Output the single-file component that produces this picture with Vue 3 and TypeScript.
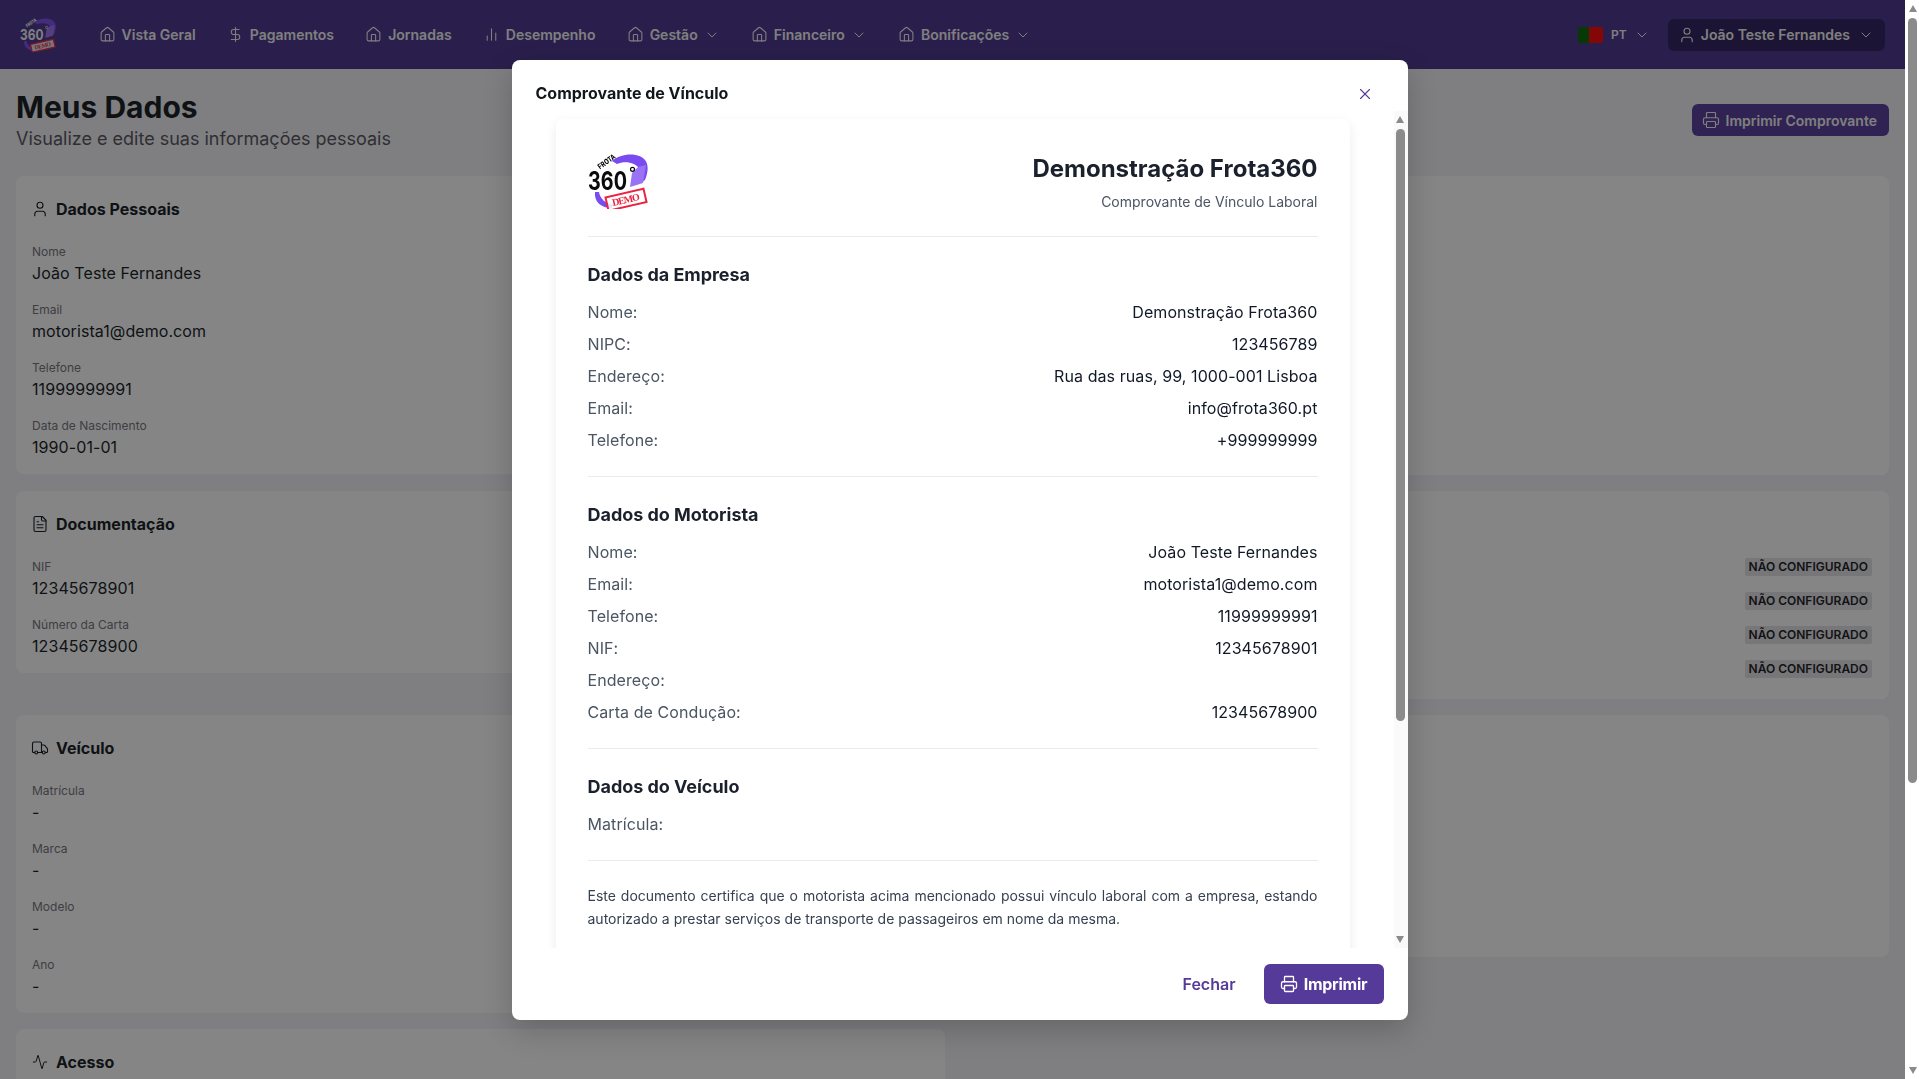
<script setup lang="ts">
import { h } from 'vue'
import type { FunctionalComponent } from 'vue'

const iconPaths: Record<string, string[]> = {
  home: ['M15 21v-8a1 1 0 0 0-1-1h-4a1 1 0 0 0-1 1v8', 'M3 10a2 2 0 0 1 .709-1.528l7-5.999a2 2 0 0 1 2.582 0l7 5.999A2 2 0 0 1 21 10v9a2 2 0 0 1-2 2H5a2 2 0 0 1-2-2z'],
  dollar: ['M12 2v20', 'M17 5H9.5a3.5 3.5 0 0 0 0 7h5a3.5 3.5 0 0 1 0 7H6'],
  bars: ['M18 20V10', 'M12 20V4', 'M6 20v-6'],
  user: ['M19 21v-2a4 4 0 0 0-4-4H9a4 4 0 0 0-4 4v2', 'M16 7a4 4 0 1 1-8 0 4 4 0 0 1 8 0'],
  file: ['M15 2H6a2 2 0 0 0-2 2v16a2 2 0 0 0 2 2h12a2 2 0 0 0 2-2V7Z', 'M14 2v4a2 2 0 0 0 2 2h4', 'M10 9H8', 'M16 13H8', 'M16 17H8'],
  truck: ['M14 18V6a2 2 0 0 0-2-2H4a2 2 0 0 0-2 2v11a1 1 0 0 0 1 1h2', 'M15 18H9', 'M19 18h2a1 1 0 0 0 1-1v-3.65a1 1 0 0 0-.22-.624l-3.48-4.35A1 1 0 0 0 17.52 8H14', 'M19 18a2 2 0 1 1-4 0 2 2 0 0 1 4 0', 'M9 18a2 2 0 1 1-4 0 2 2 0 0 1 4 0'],
  activity: ['M22 12h-2.48a2 2 0 0 0-1.93 1.46l-2.35 8.36a.25.25 0 0 1-.48 0L9.24 2.18a.25.25 0 0 0-.48 0l-2.35 8.36A2 2 0 0 1 4.49 12H2'],
  printer: ['M6 18H4a2 2 0 0 1-2-2v-5a2 2 0 0 1 2-2h16a2 2 0 0 1 2 2v5a2 2 0 0 1-2 2h-2', 'M6 9V3a1 1 0 0 1 1-1h10a1 1 0 0 1 1 1v6', 'M7 14h10a1 1 0 0 1 1 1v6a1 1 0 0 1-1 1H7a1 1 0 0 1-1-1v-6a1 1 0 0 1 1-1z'],
  chevron: ['m6 9 6 6 6-6'],
  close: ['M18 6 6 18', 'm6 6 12 12'],
}

const Icon: FunctionalComponent<{ name: string; size?: number; weight?: number }> = (props) =>
  h(
    'svg',
    {
      width: props.size ?? 18,
      height: props.size ?? 18,
      viewBox: '0 0 24 24',
      fill: 'none',
      stroke: 'currentColor',
      'stroke-width': props.weight ?? 1.5,
      'stroke-linecap': 'round',
      'stroke-linejoin': 'round',
      style: { flex: 'none', display: 'block' },
    },
    iconPaths[props.name].map((d) => h('path', { d })),
  )

const Logo: FunctionalComponent<{ width: number; height: number; ink: string }> = (props) =>
  h('svg', { width: props.width, height: props.height, viewBox: '0 0 60 56', style: { flex: 'none', display: 'block' } }, [
    h('path', { d: 'M24 8C33 0 50-1 57 7C61 12 60 19 57 27L51 31L49 22L53 18C49 10 38 7 29 11Z', fill: '#7a4bf0' }),
    h('path', { d: 'M50 14L58 12L55 30L42 34L44 20Z', fill: '#9a72f5' }),
    h('path', { d: 'M7 39C6 49 13 55 24 55L25 51C18 51 12 46 11 39Z', fill: '#7a4bf0' }),
    h('text', { x: 0, y: 37, 'font-family': 'Inter, sans-serif', 'font-weight': 700, 'font-size': 25, textLength: 39, lengthAdjust: 'spacingAndGlyphs', fill: props.ink }, '360'),
    h('circle', { cx: 44.5, cy: 16.3, r: 2, fill: 'none', stroke: props.ink, 'stroke-width': 1.2 }),
    h('text', { x: 19, y: 11, 'text-anchor': 'middle', 'font-family': 'Inter, sans-serif', 'font-weight': 800, 'font-size': 7.5, textLength: 20, lengthAdjust: 'spacingAndGlyphs', fill: props.ink, transform: 'rotate(-36 19 9)' }, 'FROTA'),
    h('g', { transform: 'rotate(-13 38 46.7)' }, [
      h('rect', { x: 18.5, y: 40, width: 39, height: 13.5, fill: '#fff', 'fill-opacity': 0.85, stroke: '#ea2440', 'stroke-width': 2 }),
      h('text', { x: 38, y: 50, 'text-anchor': 'middle', 'font-family': '"Liberation Serif", serif', 'font-weight': 700, 'font-size': 10, fill: '#ea2440', textLength: 28 }, 'DEMO'),
    ]),
  ])

const navItems = [
  { label: 'Vista Geral', icon: 'home', menu: false },
  { label: 'Pagamentos', icon: 'dollar', menu: false },
  { label: 'Jornadas', icon: 'home', menu: false },
  { label: 'Desempenho', icon: 'bars', menu: false },
  { label: 'Gestão', icon: 'home', menu: true },
  { label: 'Financeiro', icon: 'home', menu: true },
  { label: 'Bonificações', icon: 'home', menu: true },
]

const personal = [
  ['Nome', 'João Teste Fernandes'],
  ['Email', 'motorista1@demo.com'],
  ['Telefone', '11999999991'],
  ['Data de Nascimento', '1990-01-01'],
]
const documents = [
  ['NIF', '12345678901'],
  ['Número da Carta', '12345678900'],
]
const vehicle = [
  ['Matrícula', '-'],
  ['Marca', '-'],
  ['Modelo', '-'],
  ['Ano', '-'],
]

const sections = [
  {
    title: 'Dados da Empresa',
    rows: [
      ['Nome:', 'Demonstração Frota360'],
      ['NIPC:', '123456789'],
      ['Endereço:', 'Rua das ruas, 99, 1000-001 Lisboa'],
      ['Email:', 'info@frota360.pt'],
      ['Telefone:', '+999999999'],
    ],
  },
  {
    title: 'Dados do Motorista',
    rows: [
      ['Nome:', 'João Teste Fernandes'],
      ['Email:', 'motorista1@demo.com'],
      ['Telefone:', '11999999991'],
      ['NIF:', '12345678901'],
      ['Endereço:', ''],
      ['Carta de Condução:', '12345678900'],
    ],
  },
  {
    title: 'Dados do Veículo',
    rows: [['Matrícula:', '']],
  },
]
</script>

<template>
  <div class="app">
    <header class="nav">
      <Logo :width="36" :height="35" ink="#f3f3f3" />
      <nav class="nav-items">
        <a v-for="item in navItems" :key="item.label" class="nav-item">
          <Icon :name="item.icon" :size="17" />
          <span>{{ item.label }}</span>
          <Icon v-if="item.menu" name="chevron" :size="16" />
        </a>
      </nav>
      <div class="nav-right">
        <div class="lang">
          <span class="flag"><i class="flag-green"></i><i class="flag-red"></i></span>
          <span>PT</span>
          <Icon name="chevron" :size="16" />
        </div>
        <div class="user-btn">
          <Icon name="user" :size="18" />
          <span class="user-name">João Teste Fernandes</span>
          <Icon name="chevron" :size="16" />
        </div>
      </div>
    </header>

    <main class="page">
      <div class="page-head">
        <div>
          <h1>Meus Dados</h1>
          <p>Visualize e edite suas informações pessoais</p>
        </div>
        <button class="print-btn" type="button"><Icon name="printer" />Imprimir Comprovante</button>
      </div>

      <div class="grid">
        <section class="card">
          <h2><span class="h-ic"><Icon name="user" /></span>Dados Pessoais</h2>
          <div class="fields">
            <div v-for="f in personal" :key="f[0]" class="field">
              <label>{{ f[0] }}</label>
              <span>{{ f[1] }}</span>
            </div>
          </div>
        </section>
        <section class="card card-r1"></section>

        <section class="card">
          <h2><span class="h-ic"><Icon name="file" /></span>Documentação</h2>
          <div class="fields">
            <div v-for="f in documents" :key="f[0]" class="field">
              <label>{{ f[0] }}</label>
              <span>{{ f[1] }}</span>
            </div>
          </div>
        </section>
        <section class="card card-r2">
          <div class="badges">
            <span v-for="n in 4" :key="n" class="badge">NÃO CONFIGURADO</span>
          </div>
        </section>

        <section class="card">
          <h2><span class="h-ic"><Icon name="truck" /></span>Veículo</h2>
          <div class="fields">
            <div v-for="f in vehicle" :key="f[0]" class="field">
              <label>{{ f[0] }}</label>
              <span>{{ f[1] }}</span>
            </div>
          </div>
        </section>
        <section class="card card-r3"></section>

        <section class="card card-access">
          <h2><span class="h-ic"><Icon name="activity" :size="16" /></span>Acesso</h2>
        </section>
      </div>
    </main>

    <div class="backdrop"></div>
    <div class="modal-wrap">
      <div class="modal">
        <div class="modal-head">
          <h3>Comprovante de Vínculo</h3>
          <button class="close" type="button"><Icon name="close" :size="18" :weight="1.5" /></button>
        </div>
        <div class="modal-main">
          <div class="modal-body">
            <article class="sheet">
              <div class="sheet-head">
                <Logo :width="60" :height="56" ink="#0b0b0b" />
                <div class="sheet-title">
                  <h4>Demonstração Frota360</h4>
                  <p>Comprovante de Vínculo Laboral</p>
                </div>
              </div>
              <div v-for="s in sections" :key="s.title" class="sheet-section">
                <h5>{{ s.title }}</h5>
                <div v-for="r in s.rows" :key="r[0]" class="sheet-row">
                  <span class="k">{{ r[0] }}</span>
                  <span class="v">{{ r[1] }}</span>
                </div>
              </div>
              <p class="legal">
                Este documento certifica que o motorista acima mencionado possui vínculo laboral com a empresa, estando
                autorizado a prestar serviços de transporte de passageiros em nome da mesma.
              </p>
            </article>
          </div>
          <div class="vbar modal-bar" aria-hidden="true">
            <i class="arrow up"></i>
            <i class="thumb"></i>
            <i class="arrow down"></i>
          </div>
        </div>
        <div class="modal-foot">
          <button class="ghost" type="button">Fechar</button>
          <button class="primary" type="button"><Icon name="printer" :size="18" :weight="1.75" />Imprimir</button>
        </div>
      </div>
    </div>
    <div class="vbar page-bar" aria-hidden="true">
      <i class="arrow up"></i>
      <i class="thumb"></i>
      <i class="arrow down"></i>
    </div>
  </div>
</template>

<style>
html {
  overflow-y: scroll;
  scrollbar-width: none;
  background: #f2f3f8;
}
</style>

<style scoped>
.app {
  font-family: Inter, "Noto Sans", sans-serif;
  color: #11181c;
  width: calc(100vw - 14px);
  min-height: 1478px;
  background: #f2f3f8;
  letter-spacing: 0.005em;
}
.nav {
  height: 69px;
  background: #49318d;
  color: #f3f3f3;
  display: flex;
  align-items: center;
  padding: 0 20px;
  box-sizing: border-box;
  letter-spacing: 0;
}
.nav-items {
  display: flex;
  align-items: center;
  margin-left: 27px;
}
.nav-item {
  display: flex;
  align-items: center;
  gap: 6px;
  padding: 0 15.6px;
  font-size: 14px;
  font-weight: 600;
}
.nav-right {
  margin-left: auto;
  display: flex;
  align-items: center;
}
.lang {
  display: flex;
  align-items: center;
  gap: 7px;
  font-size: 12px;
  font-weight: 600;
  margin-right: 18px;
}
.flag {
  display: flex;
  width: 25px;
  height: 16px;
  border-radius: 2px;
  overflow: hidden;
  margin-right: 1px;
}
.flag-green {
  width: 42%;
  background: #006600;
}
.flag-red {
  width: 58%;
  background: #ff0000;
}
.user-btn {
  display: flex;
  align-items: center;
  height: 32px;
  padding: 0 11px 0 10px;
  background: #2d1d5d;
  border-radius: 6px;
  font-size: 14px;
  font-weight: 600;
  box-sizing: border-box;
}
.user-name {
  margin: 0 8px 0 5px;
}
.page {
  padding: 20px 16px 0;
}
.page-head {
  display: flex;
  justify-content: space-between;
  align-items: center;
  margin-bottom: 23px;
}
h1 {
  margin: 0;
  font-size: 30px;
  line-height: 36px;
  font-weight: 700;
  letter-spacing: 0;
}
.page-head p {
  margin: 0;
  font-size: 18px;
  line-height: 28px;
  color: #52525b;
  letter-spacing: 0;
}
.print-btn {
  display: flex;
  align-items: center;
  gap: 6px;
  height: 32px;
  padding: 0 12px 0 10px;
  margin-bottom: 2px;
  border: 0;
  border-radius: 6px;
  background: #553a9a;
  color: #f3f3f3;
  font: 600 14px Inter, sans-serif;
}
.grid {
  display: grid;
  grid-template-columns: 1fr 1fr;
  gap: 16px;
  align-items: start;
}
.card {
  background: #fff;
  border-radius: 8px;
  padding: 21px 16px 15px;
  box-sizing: border-box;
}
.card-r1 {
  height: 299px;
}
.card-r2 {
  height: 208px;
}
.card-r3 {
  height: 242px;
}
.card-access {
  height: 432px;
}
.card h2 {
  display: flex;
  align-items: center;
  gap: 4px;
  margin: 0 0 23px;
  font-size: 16px;
  line-height: 24px;
  font-weight: 700;
  letter-spacing: 0;
}
.h-ic {
  width: 24px;
  margin-left: -4px;
  display: flex;
  justify-content: center;
}
.fields {
  display: flex;
  flex-direction: column;
  gap: 17px;
}
.field {
  display: flex;
  flex-direction: column;
  gap: 1px;
}
.field label {
  font-size: 12px;
  line-height: 16px;
  color: #71717a;
  letter-spacing: 0;
}
.field span {
  font-size: 16px;
  line-height: 24px;
}
.badges {
  display: flex;
  flex-direction: column;
  align-items: flex-end;
  gap: 16px;
  padding-top: 46px;
  margin-right: 1px;
}
.badge {
  height: 18px;
  line-height: 18px;
  padding: 0 4px;
  background: #e2e2e8;
  border-radius: 2px;
  font-size: 12px;
  font-weight: 600;
  color: #18181b;
  letter-spacing: 0;
}
.backdrop {
  position: fixed;
  inset: 0;
  background: rgba(11, 11, 11, 0.5);
}
.modal-wrap {
  position: fixed;
  top: 0;
  left: 0;
  width: 100vw;
  height: 100vh;
  display: flex;
  justify-content: center;
  align-items: flex-start;
  padding-top: 60px;
  box-sizing: border-box;
}
.modal {
  width: 896px;
  height: 960px;
  background: #fff;
  border-radius: 8px;
  box-shadow: 0 10px 30px rgba(0, 0, 0, 0.2);
  display: flex;
  flex-direction: column;
  position: relative;
  overflow: hidden;
}
.modal-head {
  height: 51px;
  flex: none;
  padding: 21px 24px 0;
  box-sizing: border-box;
}
.modal-head h3 {
  margin: 0;
  font-size: 16px;
  line-height: 24px;
  font-weight: 700;
  letter-spacing: 0;
  color: #11181c;
}
.close {
  position: absolute;
  top: 25px;
  right: 34px;
  padding: 0;
  border: 0;
  background: none;
  color: #553a9a;
}
.modal-main {
  flex: 1;
  min-height: 0;
  display: flex;
}
.modal-body {
  flex: 1;
  min-width: 0;
  overflow: hidden;
  padding: 8px 24px;
  box-sizing: border-box;
}
.vbar {
  width: 14px;
  flex: none;
  display: flex;
  flex-direction: column;
  box-sizing: border-box;
}
.modal-bar {
  padding: 0 3px 0 2px;
  background: #fafafa;
}
.page-bar {
  position: fixed;
  top: 0;
  right: 0;
  bottom: 0;
  padding: 0 2px 0 3px;
  background: #fff;
}
.arrow {
  height: 17px;
  flex: none;
  display: flex;
  align-items: center;
  justify-content: center;
}
.arrow::before {
  content: "";
  border-left: 4.5px solid transparent;
  border-right: 4.5px solid transparent;
}
.arrow.up::before {
  border-bottom: 7px solid #8a8a8a;
}
.arrow.down {
  margin-top: auto;
}
.arrow.down::before {
  border-top: 7px solid #8a8a8a;
}
.thumb {
  margin-top: 1px;
  background: #8b8b8b;
  border-radius: 5px;
}
.modal-bar .thumb {
  height: 592px;
}
.page-bar .thumb {
  height: 765px;
}
.sheet {
  width: 794px;
  min-height: 1123px;
  margin: 0 auto;
  padding: 32px;
  box-sizing: border-box;
  background: #fff;
  border-radius: 8px;
  box-shadow: 0 4px 12px rgba(0, 0, 0, 0.08);
}
.sheet-head {
  display: flex;
  justify-content: space-between;
  align-items: flex-start;
  padding: 2px 0 24px;
  border-bottom: 1px solid #e9ebef;
}
.sheet-title {
  text-align: right;
}
.sheet-title h4 {
  margin: 0 0 7px;
  font-size: 24px;
  line-height: 32px;
  font-weight: 700;
  letter-spacing: 0;
  color: #1a202c;
}
.sheet-title p {
  margin: 0;
  font-size: 14px;
  line-height: 20px;
  color: #4b5563;
  letter-spacing: 0;
}
.sheet-section {
  padding: 24px 0;
  border-bottom: 1px solid #e9ebef;
}
.sheet-section h5 {
  margin: 0 0 11px;
  font-size: 18px;
  line-height: 28px;
  font-weight: 700;
  letter-spacing: -0.002em;
  color: #1a202c;
}
.sheet-row {
  display: flex;
  justify-content: space-between;
  font-size: 16px;
  line-height: 24px;
  height: 24px;
}
.sheet-row + .sheet-row {
  margin-top: 8px;
}
.k {
  color: #4b5563;
}
.v {
  color: #111827;
}
.legal {
  margin: 23px 0 0;
  font-size: 14px;
  line-height: 23px;
  text-align: justify;
  color: #374151;
  letter-spacing: 0;
}
.modal-foot {
  height: 72px;
  flex: none;
  display: flex;
  justify-content: flex-end;
  align-items: center;
  padding: 0 24px;
  box-sizing: border-box;
}
.ghost {
  height: 40px;
  border: 0;
  background: none;
  padding: 0 28px 0 16px;
  color: #553a9a;
  font: 600 16px Inter, sans-serif;
}
.primary {
  height: 40px;
  width: 120px;
  display: flex;
  align-items: center;
  justify-content: center;
  gap: 6px;
  border: 0;
  border-radius: 6px;
  background: #553a9a;
  color: #fff;
  font: 700 16px Inter, sans-serif;
  letter-spacing: -0.015em;
}
</style>
